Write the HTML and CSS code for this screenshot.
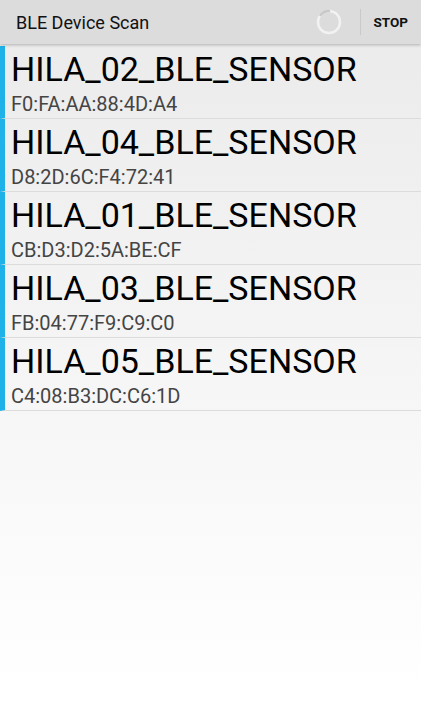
FILE: index.html
```html
<!DOCTYPE html>
<html>
<head>
<meta charset="utf-8">
<link rel="stylesheet" href="styles.css">
</head>
<body>
<div class="toolbar">
  <div class="title">BLE Device Scan</div>
  <div class="spinner">
    <svg width="26" height="26" viewBox="0 0 26 26">
      <circle cx="13" cy="13" r="11" fill="none" stroke="#f2f2f2" stroke-width="2.5"/>
      <path d="M4.5 6 A11 11 0 0 1 13 2" fill="none" stroke="#c8c8c8" stroke-width="2.5" stroke-linecap="round"/>
    </svg>
  </div>
  <div class="divider"></div>
  <div class="action">STOP</div>
</div>
<div class="list">
  <div class="row"><div class="name">HILA_02_BLE_SENSOR</div><div class="mac">F0:FA:AA:88:4D:A4</div></div>
  <div class="row"><div class="name">HILA_04_BLE_SENSOR</div><div class="mac">D8:2D:6C:F4:72:41</div></div>
  <div class="row"><div class="name">HILA_01_BLE_SENSOR</div><div class="mac">CB:D3:D2:5A:BE:CF</div></div>
  <div class="row"><div class="name">HILA_03_BLE_SENSOR</div><div class="mac">FB:04:77:F9:C9:C0</div></div>
  <div class="row"><div class="name">HILA_05_BLE_SENSOR</div><div class="mac">C4:08:B3:DC:C6:1D</div></div>
</div>
</body>
</html>
```
FILE: styles.css
```css
html, body {
  margin: 0;
  padding: 0;
  height: 100%;
}
body {
  font-family: Roboto, "Noto Sans", sans-serif;
  background: linear-gradient(to bottom, #ebebeb 0px, #ececec 60px, #ffffff 690px, #ffffff 720px);
  min-height: 720px;
}
.toolbar {
  height: 44px;
  background: #dcdcdc;
  display: flex;
  align-items: center;
  box-shadow: 0 1px 3px rgba(0,0,0,0.25);
  position: relative;
}
.title {
  flex: 1;
  padding-left: 16px;
  font-size: 18px;
  color: #111;
}
.spinner {
  width: 26px;
  height: 26px;
  margin-right: 18px;
  display: flex;
}
.divider {
  width: 1px;
  height: 26px;
  background: #c9c9c9;
}
.action {
  padding: 0 13px 0 12px;
  font-size: 13.5px;
  font-weight: bold;
  color: #111;
}
.list {
  padding-top: 2px;
}
.row {
  height: 72px;
  border-left: 5px solid #1eb2e8;
  border-bottom: 1px solid #dcdcdc;
  padding-left: 6px;
}
.name {
  font-size: 34px;
  line-height: 46px;
  color: #000;
}
.mac {
  font-size: 20px;
  line-height: 24px;
  color: #444;
}
```
